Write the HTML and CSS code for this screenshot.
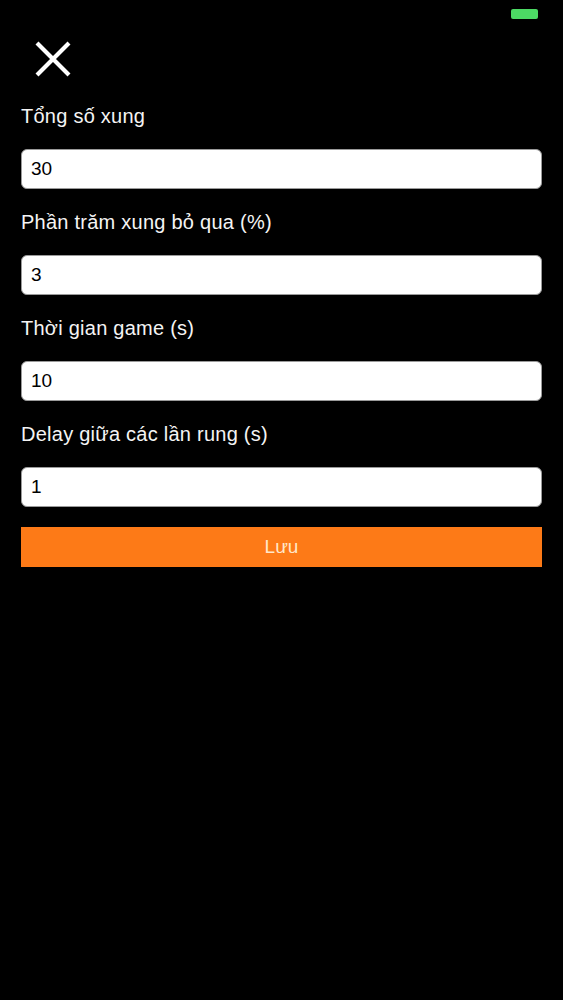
FILE: index.html
```html
<!DOCTYPE html>
<html lang="vi">
<head>
<meta charset="utf-8">
<title>Cài đặt</title>
<link rel="stylesheet" href="styles.css">
</head>
<body>
<div class="screen">
  <div class="status-bar">
    <div class="battery"></div>
  </div>
  <div class="header">
    <button class="close-btn" aria-label="Đóng">
      <svg width="38" height="38" viewBox="0 0 38 38">
        <path d="M3 3 L35 35 M35 3 L3 35" stroke="#fff" stroke-width="4.2" stroke-linecap="butt" fill="none"/>
      </svg>
    </button>
  </div>
  <form class="form">
    <label class="field">
      <span class="label">Tổng số xung</span>
      <input class="input" type="text" value="30">
    </label>
    <label class="field">
      <span class="label">Phần trăm xung bỏ qua (%)</span>
      <input class="input" type="text" value="3">
    </label>
    <label class="field">
      <span class="label">Thời gian game (s)</span>
      <input class="input" type="text" value="10">
    </label>
    <label class="field">
      <span class="label">Delay giữa các lần rung (s)</span>
      <input class="input" type="text" value="1">
    </label>
    <button class="save-btn" type="button">Lưu</button>
  </form>
</div>
</body>
</html>
```
FILE: styles.css
```css
html, body {
  margin: 0;
  padding: 0;
  background: #000;
}
body {
  font-family: "Liberation Sans", Arial, sans-serif;
  color: #fff;
}
.screen {
  width: 563px;
  min-height: 1000px;
  display: flex;
  flex-direction: column;
}
.status-bar {
  height: 28px;
  display: flex;
  justify-content: flex-end;
  align-items: flex-start;
  padding-right: 25px;
}
.battery {
  margin-top: 9px;
  width: 27px;
  height: 10px;
  border-radius: 2px;
  background: #4cd964;
}
.header {
  height: 76px;
  display: flex;
  align-items: flex-start;
  padding-left: 34px;
}
.close-btn {
  margin-top: 12px;
  padding: 0;
  border: 0;
  background: transparent;
  width: 38px;
  height: 38px;
  display: block;
}
.close-btn svg {
  display: block;
}
.form {
  display: flex;
  flex-direction: column;
  padding: 0 21px;
}
.field {
  display: flex;
  flex-direction: column;
  margin-bottom: 21px;
}
.label {
  font-size: 20px;
  letter-spacing: 0.25px;
  line-height: 24px;
  height: 24px;
  color: #f4f4f4;
  margin-bottom: 21px;
}
.input {
  box-sizing: border-box;
  height: 40px;
  width: 100%;
  margin: 0;
  border: 1px solid #9a9a9a;
  border-radius: 6px;
  background: #fff;
  padding: 0 9px;
  font-family: "Liberation Sans", Arial, sans-serif;
  font-size: 19px;
  color: #000;
  outline: none;
}
.save-btn {
  margin-top: -1px;
  height: 40px;
  width: 100%;
  border: 0;
  border-radius: 0;
  background: #fd7a17;
  color: #ffe7c9;
  font-family: "Liberation Sans", Arial, sans-serif;
  font-size: 19px;
  padding: 0;
}
```
